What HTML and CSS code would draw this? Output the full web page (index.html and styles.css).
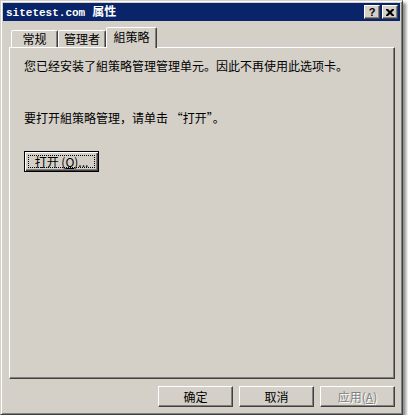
FILE: index.html
```html
<!DOCTYPE html>
<html lang="zh-CN">
<head>
  <meta charset="UTF-8" />
  <title>属性</title>
  <link rel="stylesheet" href="styles.css">
</head>
<body>
  <div class="window">
    <div class="titlebar">
      <div class="title"><span class="host">sitetest.com</span><span class="name">属性</span></div>
      <div class="tbtn help">?</div>
      <div class="tbtn close">
        <svg width="8" height="7" viewBox="0 0 8 7"><path d="M0 0h2l2 2 2-2h2v1l-2.5 2.5L8 6v1H6L4 5 2 7H0V6l2.5-2.5L0 1z" fill="#000"/></svg>
      </div>
    </div>

    <div class="tabs">
      <div class="tab t1">常规</div>
      <div class="tab t2">管理者</div>
      <div class="tab active">組策略</div>
    </div>
    <div class="panel">
      <p class="line1">您已经安装了組策略管理管理单元。因此不再使用此选项卡。</p>
      <p class="line2">要打开組策略管理，请单击 “打开”。</p>
      <div class="btn default"><span class="focus">打开 (<u>O</u>)...</span></div>
    </div>

    <div class="actions">
      <div class="btn">确定</div>
      <div class="btn">取消</div>
      <div class="btn disabled">应用(<u>A</u>)</div>
    </div>
  </div>
</body>
</html>
```

FILE: styles.css
```css
* {
  box-sizing: border-box;
}

body {
  margin: 0;
  background: #fff;
  font-family: "Noto Sans CJK SC", "Liberation Sans", sans-serif;
  font-size: 12px;
  color: #000;
}

.window {
  width: 403px;
  height: 415px;
  background: #d4d0c8;
  border: 1px solid;
  border-color: #d4d0c8 #404040 #404040 #d4d0c8;
  box-shadow: inset 1px 1px #fff, inset -1px -1px #808080, 3px 3px 3px rgba(0, 0, 0, 0.45);
  padding: 2px;
  display: flex;
  flex-direction: column;
}

.titlebar {
  height: 18px;
  background: #0a246a;
  color: #fff;
  display: flex;
  align-items: center;
  padding: 0 2px 0 3px;
}

.title {
  flex: 1;
  font-weight: bold;
  font-size: 12px;
  line-height: 18px;
  white-space: nowrap;
}

.title .host {
  font-family: "Liberation Mono", monospace;
  font-size: 11px;
}

.title .name {
  margin-left: 7px;
}

.tbtn {
  width: 16px;
  height: 14px;
  background: #d4d0c8;
  border: 1px solid;
  border-color: #fff #404040 #404040 #fff;
  box-shadow: inset -1px -1px #808080;
  display: flex;
  align-items: center;
  justify-content: center;
  color: #000;
  font-family: "Liberation Sans", sans-serif;
  font-weight: bold;
  font-size: 11px;
  line-height: 12px;
}

.tbtn.close {
  margin-left: 2px;
}

.tabs {
  display: flex;
  align-items: flex-end;
  height: 20px;
  margin: 7px 5px -1px 6px;
  padding-left: 2px;
  position: relative;
  z-index: 1;
}

.tab {
  height: 17px;
  border: 1px solid;
  border-bottom: none;
  border-color: #fff #404040 transparent #fff;
  border-radius: 2px 2px 0 0;
  box-shadow: inset -1px 0 #808080;
  text-align: center;
  line-height: 16px;
  background: #d4d0c8;
  margin-bottom: 1px;
}

.t1 {
  width: 47px;
}

.t2 {
  width: 48px;
}

.tab.active {
  width: 51px;
  height: 21px;
  margin-bottom: 0;
  line-height: 18px;
}

.panel {
  height: 332px;
  margin: 0 5px 0 6px;
  border: 1px solid;
  border-color: #fff #404040 #404040 #fff;
  box-shadow: inset -1px -1px #808080;
  padding: 10px 14px;
}

.panel p {
  margin: 0;
  line-height: 16px;
  white-space: nowrap;
}

.panel .line2 {
  margin-top: 36px;
}

.btn {
  width: 75px;
  height: 21px;
  border: 1px solid;
  border-color: #fff #404040 #404040 #fff;
  box-shadow: inset -1px -1px #808080;
  display: flex;
  align-items: center;
  justify-content: center;
  line-height: 16px;
  background: #d4d0c8;
}

.btn.default {
  margin-top: 25px;
  border: 1px solid #000;
  box-shadow: inset 1px 1px #fff, inset -1px -1px #404040, inset -2px -2px #808080;
  padding: 3px;
}

.btn .focus {
  flex: 1;
  align-self: stretch;
  border: 1px dotted #000;
  text-align: center;
  line-height: 11px;
}

.actions {
  display: flex;
  justify-content: flex-end;
  gap: 6px;
  margin-top: 7px;
  padding-right: 5px;
}

.btn.disabled {
  color: #808080;
  text-shadow: 1px 1px #fff;
}
```
